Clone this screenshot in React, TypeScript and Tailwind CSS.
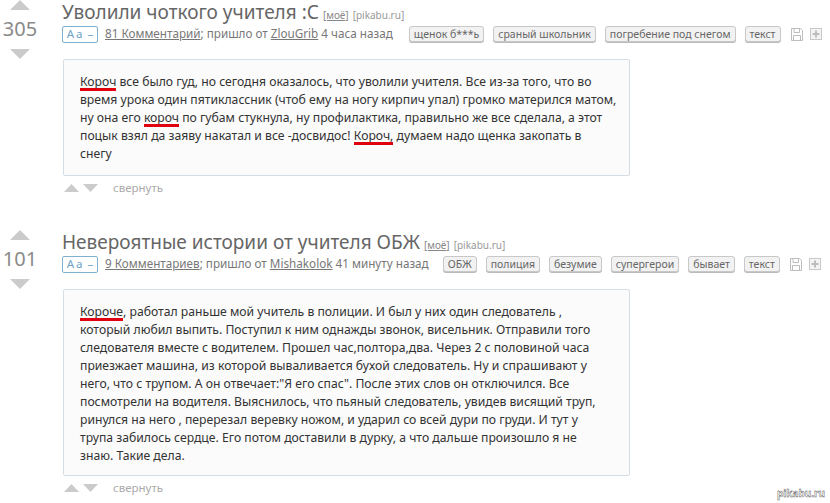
const F = { fontFamily: '"Noto Sans", "Liberation Sans", sans-serif' };

function Up({ w, h }: { w: number; h: number }) {
  return (
    <svg width={w} height={h} viewBox="0 0 20 10" preserveAspectRatio="none" className="block">
      <path d="M10 0L20 10H0z" fill="#cbcbcb" />
    </svg>
  );
}
function Down({ w, h }: { w: number; h: number }) {
  return (
    <svg width={w} height={h} viewBox="0 0 20 10" preserveAspectRatio="none" className="block">
      <path d="M0 0H20L10 10z" fill="#cbcbcb" />
    </svg>
  );
}
function Red({ children }: { children: React.ReactNode }) {
  return (
    <span className="relative inline-block leading-[18px]">
      {children}
      <span className="absolute left-0 right-0 top-[15px] h-[3px] bg-[#e0000f]" />
    </span>
  );
}
function Tag({ t }: { t: string }) {
  return (
    <span className="h-[16px] px-[4px] flex items-center rounded-[3px] border border-[#c8c8c8] bg-[#f2f2f2] text-[10.5px] text-[#666] shadow-[0_1px_0_#bbb] leading-none whitespace-nowrap">
      {t}
    </span>
  );
}
function SaveIcons() {
  return (
    <div className="flex items-center gap-[7px] ml-[10px]">
      <svg width="12" height="13" viewBox="0 0 12 13" fill="none" stroke="#bdbdbd">
        <path d="M.5.5H9.5L11.5 2.5V12.5H.5z" />
        <path d="M3 .5V4.5H8.5V.5M2.5 12.5V7.5H9.5V12.5" />
      </svg>
      <svg width="12" height="12" viewBox="0 0 12 12" fill="none">
        <rect x=".5" y=".5" width="11" height="11" stroke="#c8c8c8" fill="#f4f4f4" />
        <path d="M6 2.5V9.5M2.5 6H9.5" stroke="#bdbdbd" strokeWidth="2" />
      </svg>
    </div>
  );
}
function Aa() {
  return (
    <span className="w-[36px] h-[17px] flex items-center justify-center gap-[3px] rounded-[2px] border border-[#7fb0cf] text-[11.5px] text-[#6ea3c6] leading-none shrink-0">
      <span className="tracking-[2px]">Aa</span>
      <span>–</span>
    </span>
  );
}

function Post({
  score, title, comments, user, time, timeGap, tags, boxH, lines,
}: {
  score: string; title: string; comments: string; user: string; time: string; timeGap: string;
  tags: string[]; boxH: string; lines: React.ReactNode;
}) {
  return (
    <div className="flex">
      <div className="w-[40px] flex flex-col items-center shrink-0">
        <Up w={20} h={10} />
        <div className="text-[20px] leading-[30px] text-[#8a8a8a] h-[39px] pb-[2px] flex items-center">{score}</div>
        <Down w={20} h={10} />
      </div>
      <div className="ml-[22px] flex-1 min-w-0">
        <div className="flex items-baseline h-[25px] whitespace-nowrap">
          <span className="text-[19px] leading-[25px] text-[#666]">{title}</span>
          <span className="ml-[4px] text-[10px] text-[#888] underline">[моё]</span>
          <span className="ml-[4px] text-[10px] text-[#999]">[pikabu.ru]</span>
        </div>
        <div className="flex items-center h-[18px] text-[11.7px] text-[#777] whitespace-nowrap">
          <Aa />
          <span className="ml-[7px]"><span className="underline">{comments}</span>; пришло от <span className="underline">{user}</span> {time}</span>
          <div className={`flex items-center gap-[9px] ${timeGap}`}>
            {tags.map((t) => <Tag key={t} t={t} />)}
          </div>
          <SaveIcons />
        </div>
        <div className={`mt-[16px] ml-[1px] w-[567px] ${boxH} box-border border border-[#d5dde5] rounded-[2px] bg-[#fbfbfb] pl-[16px] pt-[13px] text-[12.2px] leading-[18px] text-[#333] whitespace-nowrap`}>
          {lines}
        </div>
        <div className="flex items-center mt-[6px] ml-[2px] h-[12px]">
          <Up w={15} h={8} />
          <span className="w-[4px]" />
          <Down w={15} h={8} />
          <span className="ml-[15px] text-[11.5px] text-[#aaa] leading-none">свернуть</span>
        </div>
      </div>
    </div>
  );
}

export default function App() {
  return (
    <div style={F} className="relative w-[830px] h-[503px] overflow-hidden bg-white">
      <Post
        score="305"
        title="Уволили чоткого учителя :С"
        comments="81 Комментарий"
        user="ZlouGrib"
        time="4 часа назад"
        timeGap="ml-[16px]"
        tags={["щенок б***ь", "сраный школьник", "погребение под снегом", "текст"]}
        boxH="h-[117px]"
        lines={
          <>
            <div><Red>Короч</Red> все было гуд, но сегодня оказалось, что уволили учителя. Все из-за того, что во</div>
            <div>время урока один пятиклассник (чтоб ему на ногу кирпич упал) громко матерился матом,</div>
            <div>ну она его <Red>короч</Red> по губам стукнула, ну профилактика, правильно же все сделала, а этот</div>
            <div>поцык взял да заяву накатал и все -досвидос! <Red>Короч,</Red> думаем надо щенка закопать в</div>
            <div>снегу</div>
          </>
        }
      />
      <div className="h-[36px]" />
      <Post
        score="101"
        title="Невероятные истории от учителя ОБЖ"
        comments="9 Комментариев"
        user="Mishakolok"
        time="41 минуту назад"
        timeGap="ml-[14px]"
        tags={["ОБЖ", "полиция", "безумие", "супергерои", "бывает", "текст"]}
        boxH="h-[187px]"
        lines={
          <>
            <div><Red>Короче</Red>, работал раньше мой учитель в полиции. И был у них один следователь ,</div>
            <div>который любил выпить. Поступил к ним однажды звонок, висельник. Отправили того</div>
            <div>следователя вместе с водителем. Прошел час,полтора,два. Через 2 с половиной часа</div>
            <div>приезжает машина, из которой вываливается бухой следователь. Ну и спрашивают у</div>
            <div>него, что с трупом. А он отвечает:"Я его спас". После этих слов он отключился. Все</div>
            <div>посмотрели на водителя. Выяснилось, что пьяный следователь, увидев висящий труп,</div>
            <div>ринулся на него , перерезал веревку ножом, и ударил со всей дури по груди. И тут у</div>
            <div>трупа забилось сердце. Его потом доставили в дурку, а что дальше произошло я не</div>
            <div>знаю. Такие дела.</div>
          </>
        }
      />
      <div className="absolute right-[5px] bottom-[5px] text-[10px] font-bold text-white leading-none [-webkit-text-stroke:0.4px_#444]">pikabu.ru</div>
    </div>
  );
}
